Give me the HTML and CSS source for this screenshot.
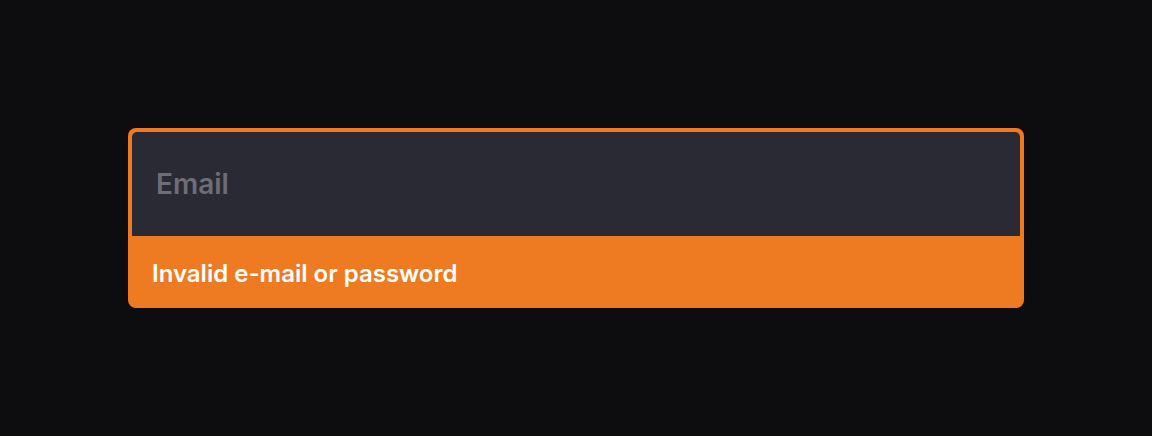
FILE: index.html
```html
<!DOCTYPE html>
<html lang="en">
<head>
    <meta charset="UTF-8">
    <title>Sign in</title>
    <link rel="stylesheet" href="styles.css">
</head>
<body>
    <div class="field error">
        <input type="email" class="field-input" placeholder="Email">
        <div class="field-message">Invalid e-mail or password</div>
    </div>
</body>
</html>
```

FILE: styles.css
```css
html, body {
    margin: 0;
    height: 100%;
}
body {
    background-color: #0d0d0f;
    font-family: Inter, "Noto Sans", sans-serif;
    display: flex;
    justify-content: center;
    padding-top: 128px;
    box-sizing: border-box;
}
.field {
    width: 896px;
    height: 180px;
    display: flex;
    flex-direction: column;
    border-radius: 8px;
    background-color: #ee7b22;
    padding: 4px 0 0;
    box-sizing: border-box;
}
.field-input {
    margin: 0 4px;
    height: 104px;
    border: none;
    border-radius: 5px 5px 0 0;
    background-color: #292a33;
    padding: 0 24px;
    font-family: inherit;
    font-size: 28px;
    font-weight: 600;
    color: #fff;
    outline: none;
}
.field-input::placeholder {
    color: #6d6d79;
}
.field-message {
    flex: 1;
    display: flex;
    align-items: center;
    padding: 2px 24px 0;
    color: #fff;
    font-size: 24px;
    font-weight: 600;
}
```
